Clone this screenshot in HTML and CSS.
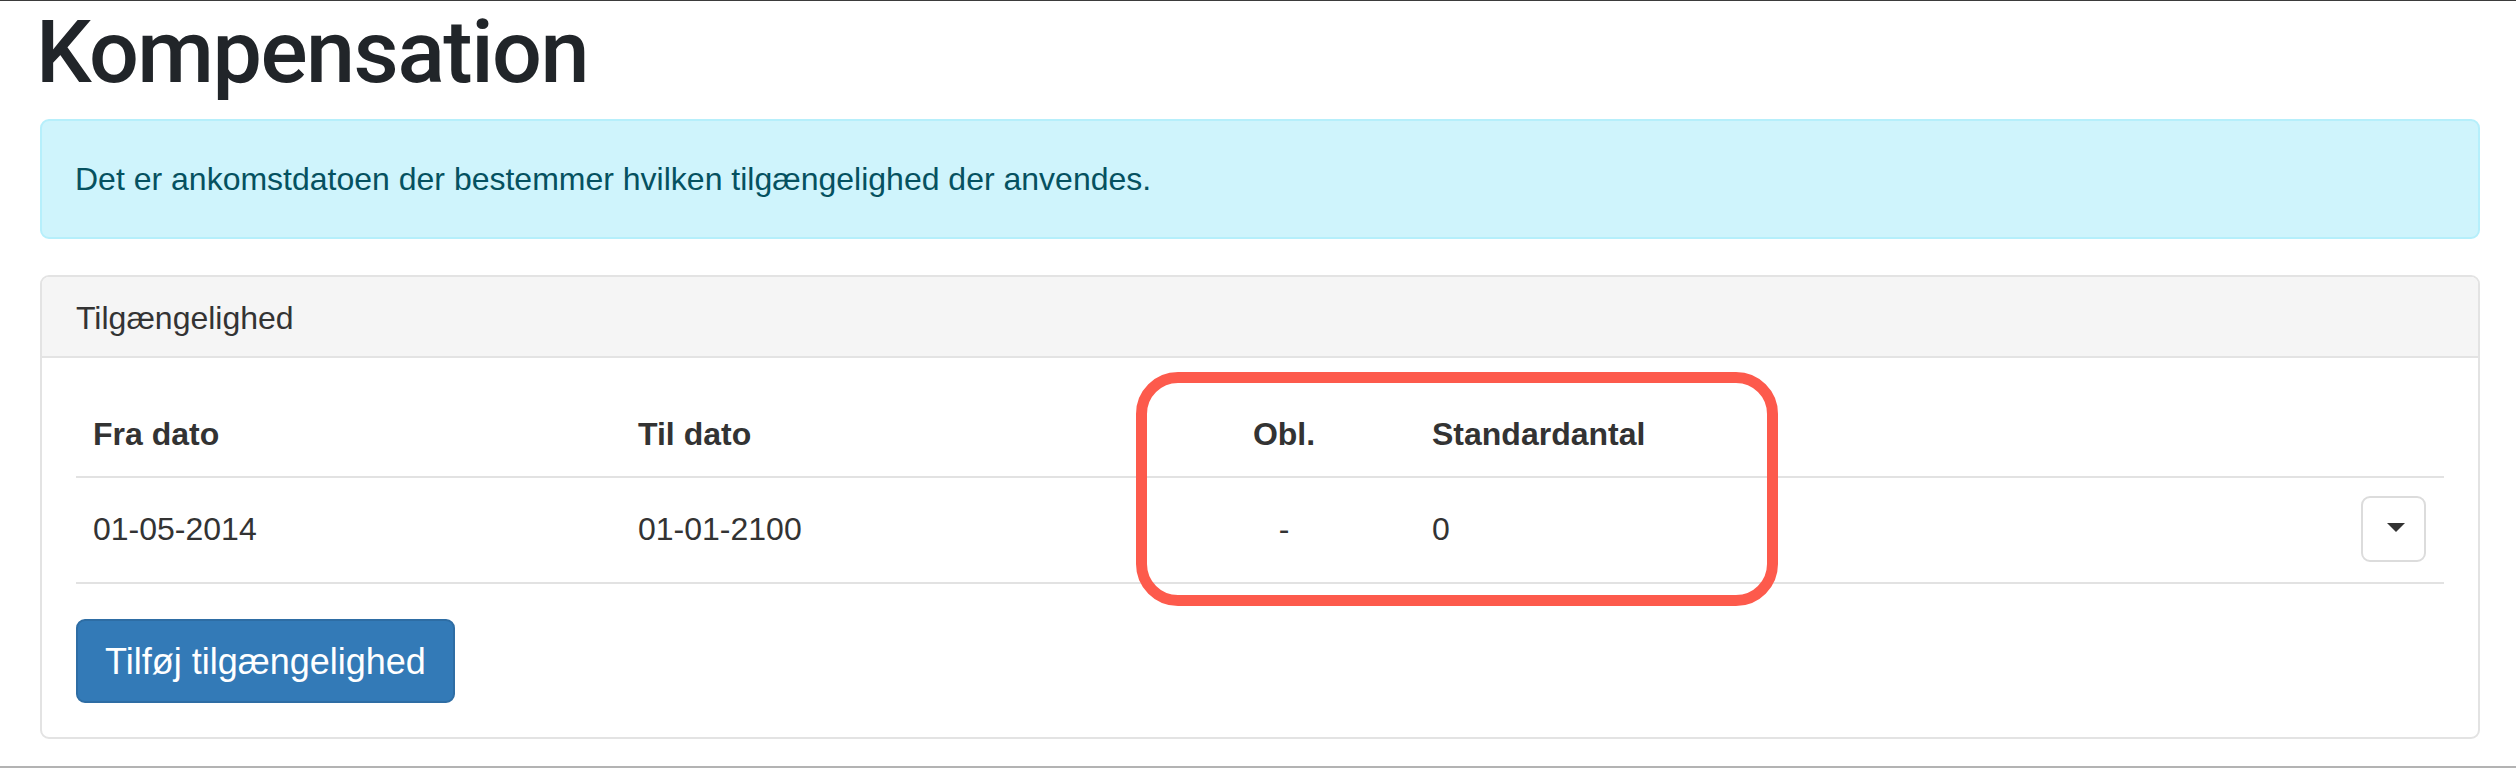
FILE: index.html
```html
<!DOCTYPE html>
<html lang="da">
<head>
<meta charset="utf-8">
<title>Kompensation</title>
<link rel="stylesheet" href="styles.css">
</head>
<body>
<div class="screen">
  <h1 class="page-title">Kompensation</h1>
  <div class="alert-info">Det er ankomstdatoen der bestemmer hvilken tilgængelighed der anvendes.</div>
  <section class="panel">
    <div class="panel-heading">Tilgængelighed</div>
    <div class="panel-body">
      <table class="avail-table">
        <colgroup>
          <col class="col-from">
          <col class="col-to">
          <col class="col-obl">
          <col class="col-std">
          <col class="col-act">
        </colgroup>
        <thead>
          <tr>
            <th>Fra dato</th>
            <th>Til dato</th>
            <th class="center">Obl.</th>
            <th>Standardantal</th>
            <th></th>
          </tr>
        </thead>
        <tbody>
          <tr>
            <td>01-05-2014</td>
            <td>01-01-2100</td>
            <td class="center">-</td>
            <td>0</td>
            <td class="right"><button class="btn-caret" type="button" aria-label="Menu"><span class="caret"></span></button></td>
          </tr>
        </tbody>
      </table>
      <button class="btn-primary" type="button">Tilføj tilgængelighed</button>
    </div>
  </section>
  <div class="annotation"></div>
</div>
</body>
</html>
```

FILE: styles.css
```css
html, body {
  margin: 0;
  padding: 0;
  background: #ffffff;
}

.screen {
  position: relative;
  height: 768px;
  box-sizing: border-box;
  border-top: 1px solid #3b3b3b;
  border-bottom: 2px solid #b3b3b3;
  padding: 2px 36px 0 40px;
  font-family: "Liberation Sans", Arial, sans-serif;
  color: #333333;
  font-size: 32px;
}

.page-title {
  margin: 0 0 19px -4px;
  font-family: Roboto, "Liberation Sans", sans-serif;
  font-weight: 500;
  font-size: 88px;
  line-height: 97px;
  letter-spacing: -1.5px;
  color: #212529;
}

.alert-info {
  box-sizing: border-box;
  height: 120px;
  padding: 35px 33px;
  line-height: 46px;
  background: #cff4fc;
  border: 2px solid #b6effb;
  border-radius: 9px;
  color: #055160;
  margin-bottom: 36px;
}

.panel {
  border: 2px solid #e3e3e3;
  border-radius: 9px;
  background: #ffffff;
  overflow: hidden;
}

.panel-heading {
  background: #f5f5f5;
  border-bottom: 2px solid #e3e3e3;
  padding: 22px 34px 18px;
  line-height: 39px;
  color: #333333;
}

.panel-body {
  padding: 34px;
}

.avail-table {
  width: 100%;
  table-layout: fixed;
  border-collapse: collapse;
  margin-bottom: 35px;
}

.col-from { width: 545px; }
.col-to { width: 532px; }
.col-obl { width: 262px; }
.col-std { width: 600px; }

.avail-table th,
.avail-table td {
  text-align: left;
  padding: 19px 18px 19px 17px;
  line-height: 46px;
  vertical-align: middle;
  border-bottom: 2px solid #e2e2e2;
}

.avail-table td {
  padding-top: 18px;
  padding-bottom: 20px;
}

.avail-table th {
  font-weight: bold;
  color: #333333;
}

.avail-table .center {
  text-align: center;
  padding-left: 18px;
}

.avail-table .right {
  text-align: right;
}

.btn-caret {
  box-sizing: border-box;
  width: 65px;
  height: 66px;
  padding: 0;
  background: #ffffff;
  border: 2px solid #dcdcdc;
  border-radius: 9px;
  display: inline-flex;
  align-items: center;
  justify-content: center;
  vertical-align: middle;
}

.caret {
  width: 0;
  height: 0;
  border-left: 9px solid transparent;
  border-right: 9px solid transparent;
  border-top: 9px solid #333333;
  margin-top: -4px;
  margin-left: 5px;
}

.btn-primary {
  box-sizing: border-box;
  height: 84px;
  padding: 0 27px;
  font-family: "Liberation Sans", Arial, sans-serif;
  font-size: 36px;
  line-height: 47px;
  color: #ffffff;
  background: #337ab7;
  border: 2px solid #2e6da4;
  border-radius: 9px;
}

.annotation {
  position: absolute;
  left: 1136px;
  top: 371px;
  width: 642px;
  height: 234px;
  box-sizing: border-box;
  border: 11px solid #fd5a4c;
  border-radius: 42px;
}
```
